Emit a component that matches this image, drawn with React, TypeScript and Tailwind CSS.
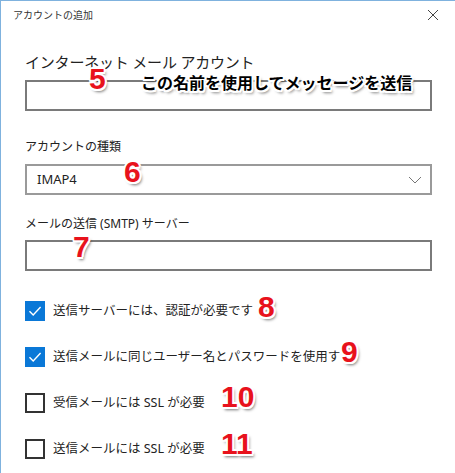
import React from "react";

const numCls =
  "absolute font-['Liberation_Sans',Arial,sans-serif] font-bold text-[30px] leading-none text-[#e8121c] [text-shadow:-1.5px_-1.5px_0_#fff,1.5px_-1.5px_0_#fff,-1.5px_1.5px_0_#fff,1.5px_1.5px_0_#fff,0_-2px_0_#fff,0_2px_0_#fff,-2px_0_0_#fff,2px_0_0_#fff,2px_3px_3px_rgba(0,0,0,0.55)]";

function Check({ checked, label }: { checked: boolean; label: string }) {
  return (
    <div className="flex items-center gap-[8px] h-[20px]">
      {checked ? (
        <div className="w-[20px] h-[20px] bg-[#0a78d7] flex items-center justify-center">
          <svg width="14" height="14" viewBox="0 0 14 14">
            <path d="M1.5 7.2 L5.2 11 L12.6 3" fill="none" stroke="#fff" strokeWidth="1.4" />
          </svg>
        </div>
      ) : (
        <div className="w-[20px] h-[20px] border-2 border-[#333]" />
      )}
      <span className="text-[12.5px] text-[#222] leading-none">{label}</span>
    </div>
  );
}

export default function App() {
  return (
    <div className="relative w-[455px] h-[473px] bg-white border-t border-l border-[#7fb2de] overflow-hidden font-['Noto_Sans','Noto_Sans_CJK_JP',sans-serif]">
      <div className="flex items-center justify-between h-[27px] pl-[12px] pr-[16px]">
        <span className="text-[10px] text-[#333] leading-none">アカウントの追加</span>
        <svg width="12" height="12" viewBox="0 0 12 12">
          <path d="M1 1 L11 11 M11 1 L1 11" stroke="#444" strokeWidth="1" fill="none" />
        </svg>
      </div>
      <div className="flex flex-col pl-[24px] pr-[23px]">
        <div className="mt-[24px] text-[15px] leading-[20px] text-[#222] tracking-[-0.2px]">インターネット メール アカウント</div>
        <div className="mt-[8px] h-[31px] border-2 border-[#7a7a7a]" />
        <div className="mt-[28px] text-[12px] leading-[16px] text-[#222]">アカウントの種類</div>
        <div className="mt-[9px] h-[31px] border-2 border-[#9a9a9a] flex items-center justify-between pl-[10px] pr-[8px]">
          <span className="text-[13px] text-[#222]">IMAP4</span>
          <svg width="14" height="8" viewBox="0 0 14 8">
            <path d="M1 1 L7 7 L13 1" stroke="#777" strokeWidth="1" fill="none" />
          </svg>
        </div>
        <div className="mt-[21px] text-[12px] leading-[16px] text-[#222]">メールの送信 (SMTP) サーバー</div>
        <div className="mt-[8px] h-[31px] border-2 border-[#7a7a7a]" />
        <div className="mt-[30px] flex flex-col gap-[26px]">
          <Check checked label="送信サーバーには、認証が必要です" />
          <Check checked label="送信メールに同じユーザー名とパスワードを使用する" />
          <Check checked={false} label="受信メールには SSL が必要" />
          <Check checked={false} label="送信メールには SSL が必要" />
        </div>
      </div>

      <span className={numCls + " left-[88px] top-[63px]"}>5</span>
      <span className="absolute left-[140px] top-[73px] text-[16px] leading-none font-bold text-black font-['Noto_Sans_CJK_JP',sans-serif] [text-shadow:-1.5px_-1.5px_0_#fff,1.5px_-1.5px_0_#fff,-1.5px_1.5px_0_#fff,1.5px_1.5px_0_#fff,0_-2px_0_#fff,0_2px_0_#fff,-2px_0_0_#fff,2px_0_0_#fff,2px_3px_3px_rgba(0,0,0,0.55)]">
        この名前を使用してメッセージを送信
      </span>
      <span className={numCls + " left-[123px] top-[156px]"}>6</span>
      <span className={numCls + " left-[72px] top-[231px]"}>7</span>
      <span className={numCls + " left-[257px] top-[291px]"}>8</span>
      <span className={numCls + " left-[340px] top-[336px]"}>9</span>
      <span className={numCls + " left-[220px] top-[381px]"}>10</span>
      <span className={numCls + " left-[220px] top-[428px]"}>11</span>
    </div>
  );
}
